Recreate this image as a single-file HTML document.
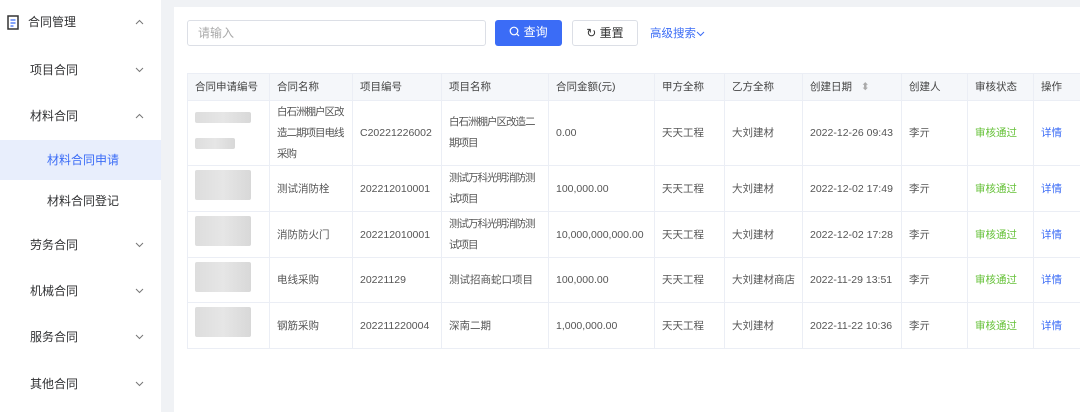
<!DOCTYPE html><html><head><meta charset="utf-8"><style>
*{margin:0;padding:0;box-sizing:border-box}
body{width:1080px;height:412px;overflow:hidden;background:#f0f2f5;font-family:"Liberation Sans","Noto Sans CJK SC",sans-serif;font-size:12px;color:#333;position:relative}
.side{position:absolute;left:0;top:0;width:161px;height:412px;background:#fff}
.mi{position:absolute;left:0;width:161px;height:40px;line-height:40px;font-size:12px;color:#303133}
.mi svg{position:absolute;right:17px;top:17px}
.card{position:absolute;left:174px;top:7px;width:906px;height:405px;background:#fff}
.inp{position:absolute;left:187px;top:20px;width:299px;height:26px;border:1px solid #dcdfe6;border-radius:3px;color:#aaa;padding-left:10px;line-height:24px}
.btn{position:absolute;top:20px;height:26px;border-radius:3px;line-height:24px;text-align:center}
table{position:absolute;left:187px;top:73px;border-collapse:collapse;table-layout:fixed;width:900px}
td,th{border:1px solid #ebeef5;padding:0 6px 0 7px;font-weight:normal;text-align:left;line-height:20px;font-size:10.5px;color:#555;white-space:nowrap}
td.w{white-space:normal;letter-spacing:-1px;line-height:21px}
th{background:#f5f7fa;height:27px;color:#444}
.blur{display:inline-block;height:11px;background:linear-gradient(90deg,#ddd,#e6e6e6,#d8d8d8);border-radius:2px}
.g{color:#67c23a}.b{color:#3b6cf6}
</style></head><body>
<div class="side">
<div class="mi" style="top:2px;padding-left:28px">合同管理<svg width="9" height="6" viewBox="0 0 9 6"><path d="M1 5L4.5 1.5 8 5" fill="none" stroke="#777"/></svg></div>
<svg style="position:absolute;left:7px;top:15px" width="13" height="15" viewBox="0 0 13 15"><rect x="1" y="1" width="10" height="13" fill="none" stroke="#333" stroke-width="1.5"/><path d="M3.5 5h5M3.5 8h5M3.5 11h3" stroke="#3b6cf6" stroke-width="1.3"/></svg>
<div class="mi" style="top:50px;padding-left:30px">项目合同<svg width="9" height="6" viewBox="0 0 9 6"><path d="M1 1L4.5 4.5 8 1" fill="none" stroke="#777"/></svg></div>
<div class="mi" style="top:96px;padding-left:30px">材料合同<svg width="9" height="6" viewBox="0 0 9 6"><path d="M1 5L4.5 1.5 8 5" fill="none" stroke="#777"/></svg></div>
<div class="mi" style="top:140px;padding-left:47px;background:#e8eefc;color:#3b6cf6">材料合同申请</div>
<div class="mi" style="top:181px;padding-left:47px">材料合同登记</div>
<div class="mi" style="top:225px;padding-left:30px">劳务合同<svg width="9" height="6" viewBox="0 0 9 6"><path d="M1 1L4.5 4.5 8 1" fill="none" stroke="#777"/></svg></div>
<div class="mi" style="top:271px;padding-left:30px">机械合同<svg width="9" height="6" viewBox="0 0 9 6"><path d="M1 1L4.5 4.5 8 1" fill="none" stroke="#777"/></svg></div>
<div class="mi" style="top:317px;padding-left:30px">服务合同<svg width="9" height="6" viewBox="0 0 9 6"><path d="M1 1L4.5 4.5 8 1" fill="none" stroke="#777"/></svg></div>
<div class="mi" style="top:364px;padding-left:30px">其他合同<svg width="9" height="6" viewBox="0 0 9 6"><path d="M1 1L4.5 4.5 8 1" fill="none" stroke="#777"/></svg></div>
</div>
<div class="card"></div>
<div class="inp">请输入</div>
<div class="btn" style="left:495px;width:67px;background:#3b6cf6;color:#fff"><svg width="11" height="11" viewBox="0 0 11 11" style="vertical-align:-1px"><circle cx="5" cy="5" r="3.8" fill="none" stroke="#fff" stroke-width="1.2"/><path d="M8 8l2 2" stroke="#fff" stroke-width="1.2"/></svg> 查询</div>
<div class="btn" style="left:572px;width:66px;border:1px solid #dcdfe6;color:#333">↻ 重置</div>
<div style="position:absolute;left:650px;top:25px;color:#3b6cf6;font-size:11.5px">高级搜索<svg width="9" height="6" viewBox="0 0 9 6"><path d="M1 1L4.5 4.5 8 1" fill="none" stroke="#3b6cf6"/></svg></div>
<table>
<colgroup><col style="width:82px"><col style="width:83px"><col style="width:89px"><col style="width:107px"><col style="width:106px"><col style="width:70px"><col style="width:78px"><col style="width:99px"><col style="width:66px"><col style="width:66px"><col style="width:54px"></colgroup>
<tr><th>合同申请编号</th><th>合同名称</th><th>项目编号</th><th>项目名称</th><th>合同金额(元)</th><th>甲方全称</th><th>乙方全称</th><th>创建日期 <span style="color:#aaa;margin-left:6px">⬍</span></th><th>创建人</th><th>审核状态</th><th>操作</th></tr>
<tr style="height:65px"><td><span class="blur" style="width:56px"></span><br><span class="blur" style="width:40px;margin-top:8px"></span></td><td class="w">白石洲棚户区改造二期项目电线采购</td><td>C20221226002</td><td class="w">白石洲棚户区改造二期项目</td><td>0.00</td><td>天天工程</td><td>大刘建材</td><td>2022-12-26 09:43</td><td>李亓</td><td class="g">审核通过</td><td class="b">详情</td></tr>
<tr style="height:46px"><td><span class="blur" style="width:56px;height:30px"></span></td><td>测试消防栓</td><td>202212010001</td><td class="w">测试万科光明消防测试项目</td><td>100,000.00</td><td>天天工程</td><td>大刘建材</td><td>2022-12-02 17:49</td><td>李亓</td><td class="g">审核通过</td><td class="b">详情</td></tr>
<tr style="height:46px"><td><span class="blur" style="width:56px;height:30px"></span></td><td>消防防火门</td><td>202212010001</td><td class="w">测试万科光明消防测试项目</td><td>10,000,000,000.00</td><td>天天工程</td><td>大刘建材</td><td>2022-12-02 17:28</td><td>李亓</td><td class="g">审核通过</td><td class="b">详情</td></tr>
<tr style="height:45px"><td><span class="blur" style="width:56px;height:30px"></span></td><td>电线采购</td><td>20221129</td><td>测试招商蛇口项目</td><td>100,000.00</td><td>天天工程</td><td>大刘建材商店</td><td>2022-11-29 13:51</td><td>李亓</td><td class="g">审核通过</td><td class="b">详情</td></tr>
<tr style="height:46px"><td><span class="blur" style="width:56px;height:30px"></span></td><td>钢筋采购</td><td>202211220004</td><td>深南二期</td><td>1,000,000.00</td><td>天天工程</td><td>大刘建材</td><td>2022-11-22 10:36</td><td>李亓</td><td class="g">审核通过</td><td class="b">详情</td></tr>
</table>
</body></html>
